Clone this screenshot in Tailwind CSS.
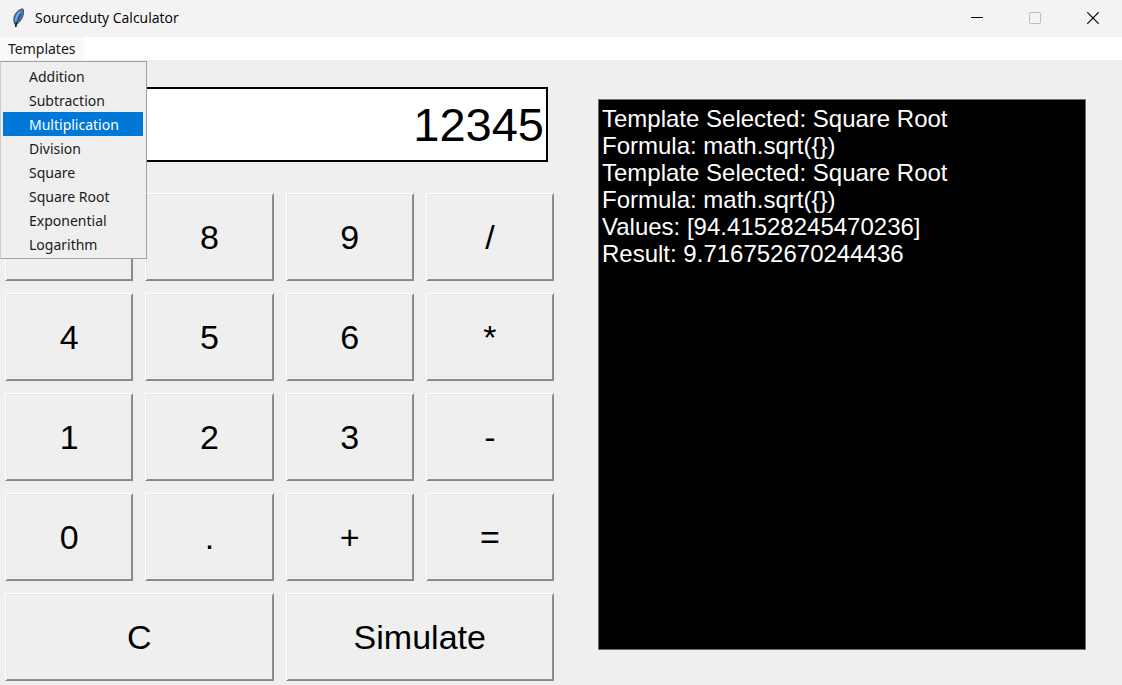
<!DOCTYPE html>
<html lang="en">
<head>
<meta charset="utf-8">
<meta name="viewport" content="width=device-width, initial-scale=1">
<title>Sourceduty Calculator</title>
<script src="https://cdn.jsdelivr.net/npm/@tailwindcss/browser@4"></script>
</head>
<body class="flex min-h-screen flex-col bg-[#efefef] font-['Liberation_Sans',Arial,sans-serif] text-black">

<!-- Title bar -->
<header class="flex h-[37px] items-center bg-[#f3f3f3] pb-[2px]">
  <svg class="ml-3 h-5 w-3" viewBox="0 0 12 20" aria-hidden="true">
    <path d="M10.800 .8C7.500 1.200 3 4.500 2 9.500C1.600 12.500 2 14.500 3 16.500L5.200 16C8.500 13.500 11 9.500 11.500 5.500C11.800 3.300 11.500 1.800 10.800 .8Z" fill="#4478b8" stroke="#3a4048" stroke-width=".9"/>
    <path d="M8.300 3.500C5.500 6 4 9.500 3.600 13" fill="none" stroke="#86aede" stroke-width="1.600"/>
    <path d="M9 6C6.500 10 5 14 4 19" fill="none" stroke="#2a3038" stroke-width=".8"/>
    <path d="M4.300 14.500L3.600 19" fill="none" stroke="#222" stroke-width="1.500"/>
  </svg>
  <h1 class="ml-[11px] font-['Open_Sans','Noto_Sans',sans-serif] text-[14px]">Sourceduty Calculator</h1>
  <div class="ml-auto flex h-full">
    <button class="grid h-full w-[58px] place-items-center" aria-label="Minimize">
      <svg class="size-3" viewBox="0 0 12 12"><path d="M0 5.500H12" stroke="#000" stroke-width="1"/></svg>
    </button>
    <button class="grid h-full w-[58px] place-items-center" aria-label="Maximize" disabled>
      <svg class="size-3" viewBox="0 0 12 12"><rect x=".5" y=".5" width="11" height="11" rx="1" fill="none" stroke="#bdbdbd"/></svg>
    </button>
    <button class="grid h-full w-[58px] place-items-center" aria-label="Close">
      <svg class="size-3" viewBox="0 0 12 12"><path d="M.3 .3L11.700 11.700M11.700 .3L.3 11.700" stroke="#000" stroke-width="1.200"/></svg>
    </button>
  </div>
</header>

<!-- Menu bar with the open Templates menu -->
<nav class="relative h-[23px] bg-white font-['Noto_Sans','Open_Sans',sans-serif] text-[14px] text-[#1a1a1a]">
  <button class="h-full bg-[#f9f9f9] px-2 leading-6" aria-haspopup="menu" aria-expanded="true">Templates</button>
  <div role="menu" aria-label="Templates" class="absolute left-0 top-6 z-10 flex w-[147px] flex-col border border-[#a0a0a0] border-l-[#cccccc] bg-[#efefef] py-[2px] pl-[2px] pr-[3px]">
    <button role="menuitem" class="h-6 pl-[26px] text-left">Addition</button>
    <button role="menuitem" class="h-6 pl-[26px] text-left">Subtraction</button>
    <button role="menuitem" class="h-6 bg-[#0078d7] pl-[26px] text-left text-white">Multiplication</button>
    <button role="menuitem" class="h-6 pl-[26px] text-left">Division</button>
    <button role="menuitem" class="h-6 pl-[26px] text-left">Square</button>
    <button role="menuitem" class="h-6 pl-[26px] text-left">Square Root</button>
    <button role="menuitem" class="h-6 pl-[26px] text-left">Exponential</button>
    <button role="menuitem" class="h-6 pl-[26px] text-left">Logarithm</button>
  </div>
</nav>

<main class="grid flex-1 grid-cols-2">
  <!-- Calculator -->
  <section class="flex flex-col pb-1 pl-[5px] pr-[7px] pt-[27px]" aria-label="Calculator">
    <input type="text" value="12345" aria-label="Display" class="mx-[6px] h-[75px] border-2 border-black bg-white pr-[2px] text-right text-[47px] outline-none">
    <div class="mt-[31px] grid grid-cols-4 gap-3 text-[34px] [&>button]:h-[88px] [&>button]:border [&>button]:border-t-white [&>button]:border-l-white [&>button]:border-r-[#868686] [&>button]:border-b-[#868686] [&>button]:shadow-[inset_1px_1px_#e6e6e6,inset_-1px_-1px_#909090]">
      <button>7</button><button>8</button><button>9</button><button>/</button>
      <button>4</button><button>5</button><button>6</button><button>*</button>
      <button>1</button><button>2</button><button>3</button><button>-</button>
      <button>0</button><button>.</button><button>+</button><button>=</button>
      <button class="col-span-2">C</button><button class="col-span-2">Simulate</button>
    </div>
  </section>

  <!-- Output log -->
  <section class="flex pb-[35px] pl-[37px] pr-9 pt-[39px]" aria-label="Output">
    <textarea readonly aria-label="Output log" class="w-full resize-none border border-[#707070] bg-black px-[3px] py-[5px] text-[24px] leading-[27px] text-white outline-none">Template Selected: Square Root
Formula: math.sqrt({})
Template Selected: Square Root
Formula: math.sqrt({})
Values: [94.41528245470236]
Result: 9.716752670244436</textarea>
  </section>
</main>
</body>
</html>
